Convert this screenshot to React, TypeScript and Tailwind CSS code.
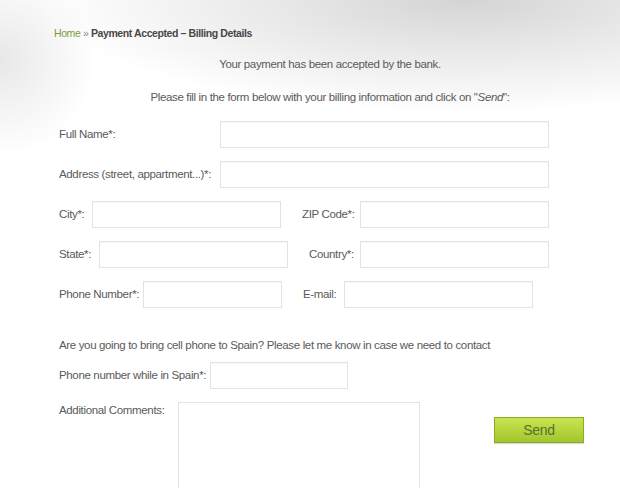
import React from "react";

const field =
  "h-[27px] border border-[#e3e3e3] bg-white outline-none shadow-[inset_0_1px_1px_rgba(0,0,0,0.03)]";

function Label({ children, className = "" }: { children: React.ReactNode; className?: string }) {
  return <span className={`shrink-0 whitespace-nowrap text-[#5a5a5a] ${className}`}>{children}</span>;
}

export default function App() {
  return (
    <main
      className="relative h-[488px] w-[620px] overflow-hidden bg-white text-[11.5px] tracking-[-0.35px] text-[#5a5a5a]"
      style={{ fontFamily: '"Liberation Sans", Arial, sans-serif' }}
    >
      {/* top shading */}
      <div className="pointer-events-none absolute inset-x-0 top-0 h-[150px] bg-[radial-gradient(ellipse_90%_100%_at_75%_0%,#d4d4d4_0%,#e6e6e6_30%,rgba(255,255,255,0)_75%)]" />
      <div className="pointer-events-none absolute left-0 top-0 h-[200px] w-[120px] bg-[radial-gradient(ellipse_100%_60%_at_0%_30%,#e8e8e8_0%,rgba(255,255,255,0)_80%)]" />

      <div className="relative pl-[54px] pt-[26px]">
        {/* Breadcrumb */}
        <nav className="text-[10.5px] leading-[14px] tracking-[-0.4px]">
          <a href="#" className="text-[#7b9a3e]">Home</a>
          <span className="text-[#888]"> » </span>
          <span className="font-bold text-[#474747]">Payment Accepted – Billing Details</span>
        </nav>

        <div className="w-[552px] text-center">
          <p className="mt-[17px] leading-[14px]">Your payment has been accepted by the bank.</p>
          <p className="mt-[19px] leading-[14px]">
            Please fill in the form below with your billing information and click on "<em>Send</em>":
          </p>
        </div>

        {/* Form */}
        <form className="ml-[5px] mt-[17px] flex flex-col gap-[13px]">
          <div className="flex items-center">
            <Label className="w-[161px]">Full Name*:</Label>
            <input className={`${field} w-[329px]`} />
          </div>
          <div className="flex items-center">
            <Label className="w-[161px]">Address (street, appartment...)*:</Label>
            <input className={`${field} w-[329px]`} />
          </div>
          <div className="flex items-center">
            <Label className="w-[33px]">City*:</Label>
            <input className={`${field} w-[189px]`} />
            <Label className="ml-[21px] w-[58px]">ZIP Code*:</Label>
            <input className={`${field} w-[189px]`} />
          </div>
          <div className="flex items-center">
            <Label className="w-[40px]">State*:</Label>
            <input className={`${field} w-[189px]`} />
            <Label className="ml-[21px] w-[51px]">Country*:</Label>
            <input className={`${field} w-[189px]`} />
          </div>
          <div className="flex items-center">
            <Label className="w-[84px]">Phone Number*:</Label>
            <input className={`${field} w-[139px]`} />
            <Label className="ml-[21px] w-[41px]">E-mail:</Label>
            <input className={`${field} w-[189px]`} />
          </div>

          <p className="mt-[17px] leading-[14px]">
            Are you going to bring cell phone to Spain? Please let me know in case we need to contact
          </p>

          <div className="-mt-[3px] flex items-center">
            <Label className="w-[151px]">Phone number while in Spain*:</Label>
            <input className={`${field} w-[138px]`} />
          </div>

          <div className="flex items-start">
            <Label className="w-[119px]">Additional Comments:</Label>
            <textarea className="h-[120px] w-[242px] resize-none border border-[#e3e3e3] bg-white outline-none" />
            <button
              type="button"
              className="ml-[74px] mt-[15px] h-[26px] w-[90px] border border-[#8aab23] bg-[linear-gradient(#c9e450,#a2c62e)] text-[14px] tracking-[-0.3px] text-[#56702e] shadow-[0_1px_1px_rgba(0,0,0,0.15)]"
            >
              Send
            </button>
          </div>
        </form>
      </div>
    </main>
  );
}
